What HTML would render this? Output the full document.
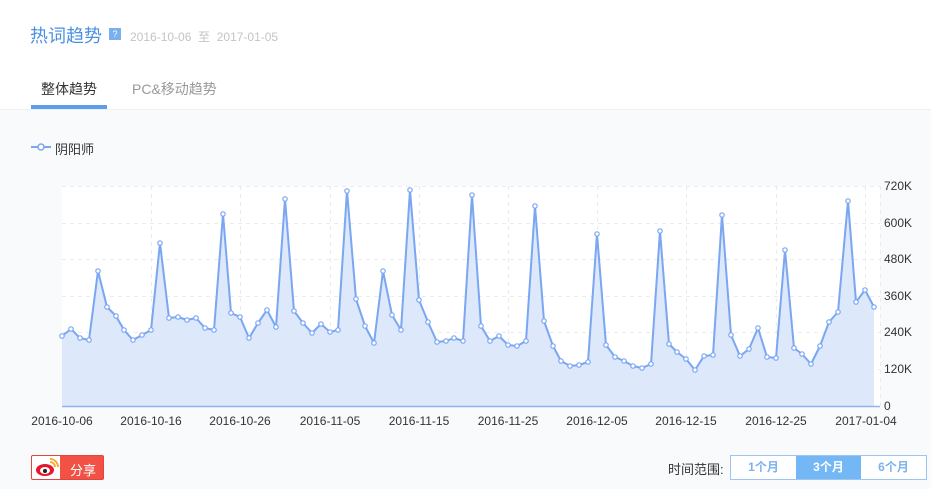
<!DOCTYPE html>
<html><head><meta charset="utf-8"><style>
body{margin:0;width:931px;height:488px;background:#fff;font-family:"Liberation Sans","Noto Sans CJK SC",sans-serif;position:relative;overflow:hidden}
.t{position:absolute}
</style></head><body>
<div class="t" style="left:0;top:0;width:931px;height:109px;background:#fff"></div>
<div class="t" style="left:0;top:109px;width:931px;height:379px;background:#f9fafc;border-top:1px solid #eef0f4"></div>
<div class="t" style="left:30px;top:22px;font-size:18px;color:#4a90e2">热词趋势</div>
<div class="t" style="left:109px;top:28px;width:12px;height:12px;background:#7ab0ee;color:#fff;font-size:9px;text-align:center;line-height:12px">?</div>
<div class="t" style="left:130px;top:28px;font-size:12px;color:#c4c4c4">2016-10-06 &nbsp;至&nbsp; 2017-01-05</div>
<div class="t" style="left:41px;top:79px;font-size:14px;color:#333">整体趋势</div>
<div class="t" style="left:31px;top:105px;width:76px;height:4px;background:#5c9ded"></div>
<div class="t" style="left:132px;top:79px;font-size:14px;color:#999">PC&amp;移动趋势</div>
<svg class="t" style="left:31px;top:142px" width="20" height="10"><line x1="0" y1="5" x2="20" y2="5" stroke="#7aa6f2" stroke-width="2"/><circle cx="10" cy="5" r="3" fill="#fff" stroke="#7aa6f2" stroke-width="1.5"/></svg>
<div class="t" style="left:55px;top:139px;font-size:13px;color:#333">阴阳师</div>
<svg class="t" style="left:0;top:0" width="931" height="488">
<rect x="62" y="186" width="818" height="220" fill="#fff"/>
<g stroke="#e8ebf0" stroke-dasharray="4,4" stroke-width="1">
<line x1="62" y1="186.5" x2="880" y2="186.5"/><line x1="62" y1="223.5" x2="880" y2="223.5"/><line x1="62" y1="259.5" x2="880" y2="259.5"/><line x1="62" y1="296.5" x2="880" y2="296.5"/><line x1="62" y1="332.5" x2="880" y2="332.5"/><line x1="62" y1="369.5" x2="880" y2="369.5"/>
<line x1="151.5" y1="186" x2="151.5" y2="406"/><line x1="240.5" y1="186" x2="240.5" y2="406"/><line x1="330.5" y1="186" x2="330.5" y2="406"/><line x1="419.5" y1="186" x2="419.5" y2="406"/><line x1="508.5" y1="186" x2="508.5" y2="406"/><line x1="597.5" y1="186" x2="597.5" y2="406"/><line x1="686.5" y1="186" x2="686.5" y2="406"/><line x1="776.5" y1="186" x2="776.5" y2="406"/><line x1="865.5" y1="186" x2="865.5" y2="406"/><line x1="880.5" y1="186" x2="880.5" y2="406"/>
</g>
<polygon fill="#dde8fa" points="62,406 62,336 71,329 80,338 89,340 98,271 107,307 116,316 124,330 133,340 142,335 151,330 160,243 169,318 178,317 187,320 196,318 205,328 214,330 223,214 231,313 240,317 249,338 258,323 267,310 276,327 285,199 294,311 303,323 312,333 321,324 330,332 338,330 347,191 356,299 365,326 374,343 383,271 392,315 401,330 410,190 419,300 428,322 437,342 446,341 454,338 463,341 472,195 481,326 490,341 499,336 508,345 517,346 526,341 535,206 544,321 553,346 561,361 570,366 579,365 588,362 597,234 606,345 615,357 624,361 633,366 642,368 651,364 660,231 669,344 677,352 686,359 695,370 704,356 713,355 722,215 731,335 740,356 749,349 758,328 767,357 776,358 785,250 794,348 802,354 811,364 820,346 829,322 838,312 848,201 856,302 865,290 874,307 874,406"/>
<polyline id="ln" fill="none" stroke="#7aa6f2" stroke-width="2" stroke-linejoin="round" points="62,336 71,329 80,338 89,340 98,271 107,307 116,316 124,330 133,340 142,335 151,330 160,243 169,318 178,317 187,320 196,318 205,328 214,330 223,214 231,313 240,317 249,338 258,323 267,310 276,327 285,199 294,311 303,323 312,333 321,324 330,332 338,330 347,191 356,299 365,326 374,343 383,271 392,315 401,330 410,190 419,300 428,322 437,342 446,341 454,338 463,341 472,195 481,326 490,341 499,336 508,345 517,346 526,341 535,206 544,321 553,346 561,361 570,366 579,365 588,362 597,234 606,345 615,357 624,361 633,366 642,368 651,364 660,231 669,344 677,352 686,359 695,370 704,356 713,355 722,215 731,335 740,356 749,349 758,328 767,357 776,358 785,250 794,348 802,354 811,364 820,346 829,322 838,312 848,201 856,302 865,290 874,307"/>
<line x1="62" y1="406.5" x2="880" y2="406.5" stroke="#8fb4f0" stroke-width="1.5"/>
<g font-size="12" fill="#333" font-family="Liberation Sans,sans-serif">
<text x="884" y="190">720K</text><text x="884" y="227">600K</text><text x="884" y="263">480K</text><text x="884" y="300">360K</text><text x="884" y="336">240K</text><text x="884" y="373">120K</text><text x="884" y="410">0</text>
<g text-anchor="middle"><text x="62" y="425">2016-10-06</text><text x="151" y="425">2016-10-16</text><text x="240" y="425">2016-10-26</text><text x="330" y="425">2016-11-05</text><text x="419" y="425">2016-11-15</text><text x="508" y="425">2016-11-25</text><text x="597" y="425">2016-12-05</text><text x="686" y="425">2016-12-15</text><text x="776" y="425">2016-12-25</text><text x="866" y="425">2017-01-04</text></g>
</g>
</svg>
<script>
(function(){var l=document.getElementById('ln');var p=l.getAttribute('points').split(' ');var s=l.parentNode;p.forEach(function(q){var a=q.split(',');var c=document.createElementNS('http://www.w3.org/2000/svg','circle');c.setAttribute('cx',a[0]);c.setAttribute('cy',a[1]);c.setAttribute('r','2.2');c.setAttribute('fill','#fff');c.setAttribute('stroke','#7aa6f2');c.setAttribute('stroke-width','1.2');s.insertBefore(c,l.nextSibling);});})();
</script>
<div class="t" style="left:31px;top:455px;width:71px;height:23px;border:1px solid #e0463c;border-radius:2px;background:#f25246;overflow:hidden">
<div style="position:absolute;left:0;top:0;width:28px;height:23px;background:#fff"></div>
<svg style="position:absolute;left:3px;top:2px" width="24" height="20"><ellipse cx="10" cy="12" rx="9" ry="6" fill="#e6162d"/><ellipse cx="10" cy="12.5" rx="5" ry="3.5" fill="#fff"/><circle cx="10" cy="13" r="2" fill="#222"/><path d="M15 4 a5 5 0 0 1 5 5" stroke="#f5a623" stroke-width="1.8" fill="none"/><path d="M15 1 a8 8 0 0 1 8 8" stroke="#f5a623" stroke-width="1.8" fill="none"/></svg>
<div style="position:absolute;left:38px;top:4px;font-size:13px;color:#fff">分享</div>
</div>
<div class="t" style="left:668px;top:459px;font-size:13px;color:#333">时间范围:</div>
<div class="t" style="left:730px;top:455px;width:195px;height:23px;border:1px solid #9cc5f3;background:#fff;font-size:12px;font-weight:bold;color:#7cb2ee">
<div style="position:absolute;left:0;top:0;width:65px;height:23px;line-height:23px;text-align:center">1个月</div>
<div style="position:absolute;left:65px;top:0;width:65px;height:23px;line-height:23px;text-align:center;background:#74b7f5;color:#fff">3个月</div>
<div style="position:absolute;left:130px;top:0;width:65px;height:23px;line-height:23px;text-align:center">6个月</div>
</div>
</body></html>
